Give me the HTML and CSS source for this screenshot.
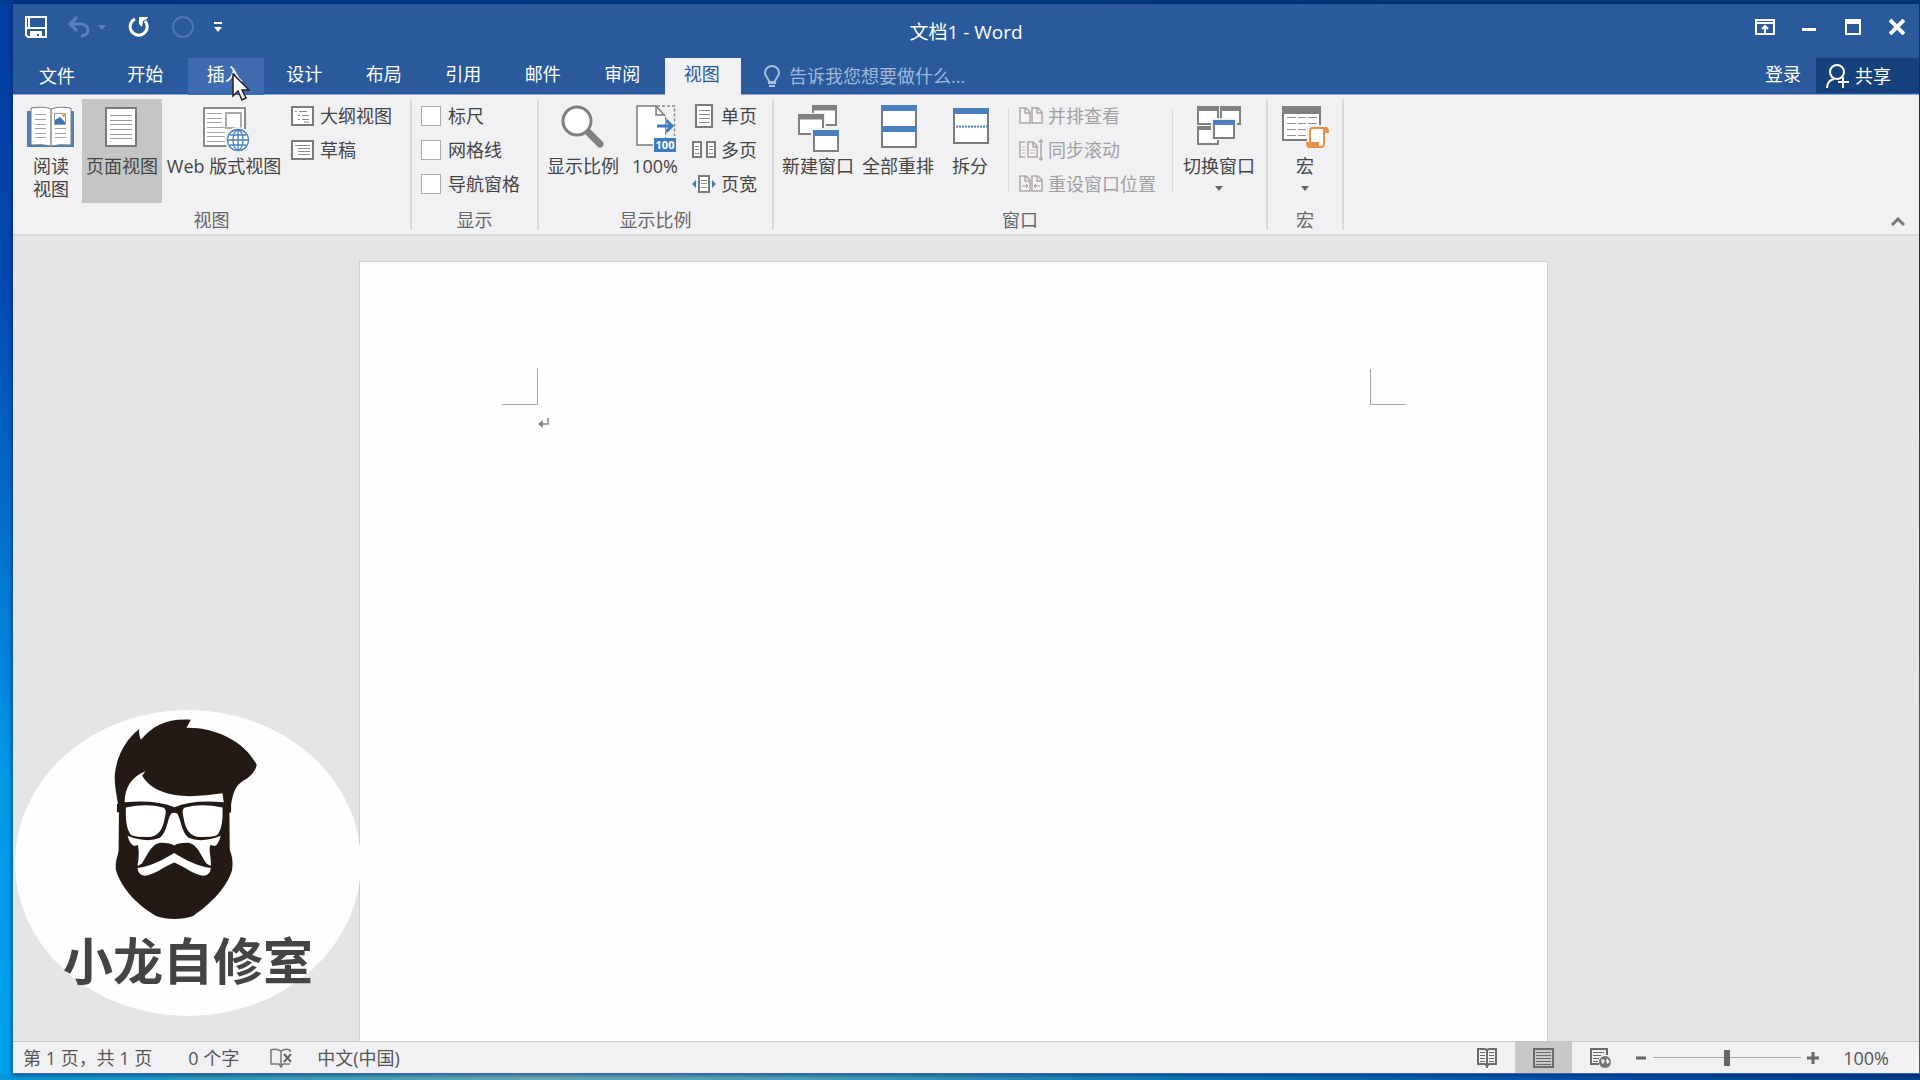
FILE: index.html
```html
<!DOCTYPE html>
<html lang="zh-CN">
<head>
  <meta charset="UTF-8">
  <meta name="viewport" content="width=device-width, initial-scale=1.0">
  <title>文档1 - Word</title>
  <link rel="stylesheet" href="styles.css">
</head>
<body>

  <div class="window">

    <!-- Title bar -->
    <header class="titlebar">
      <div class="quick-access">
        <button class="qa-btn" aria-label="保存">
          <svg width="22" height="22" viewBox="0 0 22 22"><path d="M1 1h20v20H3l-2-2zM2 12h18M4 2v10" fill="none" stroke="#fff" stroke-width="2"/><path d="M5 15h12v6h-3v-3h-2v3H5z" fill="#fff"/></svg>
        </button>
        <button class="qa-btn undo" aria-label="撤消">
          <svg width="24" height="22" viewBox="0 0 24 22"><path d="M10 1L3 8l7 7M3 8h10c11 0 10 12 1 12" fill="none" stroke="#5a82bd" stroke-width="3"/></svg>
          <svg width="8" height="5" viewBox="0 0 8 5"><path d="M0 0h8L4 5z" fill="#5a82bd"/></svg>
        </button>
        <button class="qa-btn redo" aria-label="重复">
          <svg width="22" height="22" viewBox="0 0 22 22"><path d="M7 3A8.500 8.500 0 1 0 17 5" fill="none" stroke="#fff" stroke-width="3"/><path d="M11 1h9l-1 2-4 2-1 6-3-3z" fill="#fff"/></svg>
        </button>
        <button class="qa-btn circle" aria-label="触摸模式">
          <svg width="22" height="22" viewBox="0 0 22 22"><circle cx="11" cy="11" r="10" fill="none" stroke="#4d78b6" stroke-width="2"/></svg>
        </button>
        <button class="qa-btn" aria-label="自定义快速访问工具栏">
          <svg width="8" height="10" viewBox="0 0 8 10"><path d="M0 0h8v2H0zM0 5h8L4 10z" fill="#fff"/></svg>
        </button>
      </div>
      <h1 class="doc-title">文档1 - Word</h1>
      <div class="window-controls">
        <button aria-label="功能区显示选项">
          <svg width="20" height="16" viewBox="0 0 20 16"><path d="M1 1h18v14H1zM1 4h18M10 14V7M7 10l3-3 3 3" fill="none" stroke="#fff" stroke-width="2"/></svg>
        </button>
        <button aria-label="最小化">
          <svg width="14" height="16" viewBox="0 0 14 16"><path d="M0 9h14v3H0z" fill="#fff"/></svg>
        </button>
        <button aria-label="最大化">
          <svg width="16" height="16" viewBox="0 0 16 16"><path d="M1 1h14v14H1z" fill="none" stroke="#fff" stroke-width="2"/><path d="M0 0h16v5H0z" fill="#fff"/></svg>
        </button>
        <button aria-label="关闭">
          <svg width="16" height="16" viewBox="0 0 16 16"><path d="M1 1l14 14M15 1L1 15" stroke="#fff" stroke-width="4"/></svg>
        </button>
      </div>
    </header>

    <!-- Ribbon tabs -->
    <nav class="tabs">
      <button class="file-tab">文件</button>
      <div class="tab-list">
        <button class="tab">开始</button>
        <button class="tab hovered">插入</button>
        <button class="tab">设计</button>
        <button class="tab">布局</button>
        <button class="tab">引用</button>
        <button class="tab">邮件</button>
        <button class="tab">审阅</button>
        <button class="tab active">视图</button>
      </div>
      <label class="tell-me">
        <svg width="16" height="22" viewBox="0 0 16 22"><path d="M5 17c0-4-4-5-4-9a7 7 0 0 1 14 0c0 4-4 5-4 9z" fill="none" stroke="#a9c0e0" stroke-width="2"/><path d="M4 18h8M5 21h6" stroke="#a9c0e0" stroke-width="2"/></svg>
        <input type="text" placeholder="告诉我您想要做什么..." aria-label="告诉我您想要做什么">
      </label>
      <a class="sign-in" href="#">登录</a>
      <button class="share">
        <svg width="24" height="26" viewBox="0 0 24 26"><circle cx="11" cy="9" r="7" fill="none" stroke="#fff" stroke-width="2"/><path d="M1 25c0-5 3-8 7-9M17 14v11M12 19h11" fill="none" stroke="#fff" stroke-width="2"/></svg>
        共享
      </button>
    </nav>

    <!-- Ribbon, view tab -->
    <section class="ribbon">
      <div class="group group-views">
        <div class="group-body">
          <button class="big reading">
            <svg class="icon" viewBox="0 0 48 48"><path d="M0 7h47v36H0z" fill="#4a80bd"/><path d="M4 4q13-2 20 1q7-3 20-1v37q-12-1-20 1q-8-2-20-1z" fill="#fff" stroke="#7b7b7b" stroke-width="1"/><path d="M24 5v37" stroke="#8a8a8a" stroke-width="1.500"/><path d="M8 10.500h11M8 15.500h11M8 20.500h11M8 24.500h11M8 29.500h11M8 33.500h11M28 24.500h11M28 29.500h11M28 33.500h11" stroke="#a3a3a3"/><path d="M27.500 9.500h11v11h-11z" fill="#fff" stroke="#999"/><path d="M28 20v-4l5-3 5 5v2z" fill="#3c74b5"/><circle cx="37" cy="11" r="2" fill="#e9a36c"/></svg>
            <span>阅读<br>视图</span>
          </button>
          <button class="big pressed">
            <svg class="icon" viewBox="0 0 48 48"><path d="M8 4h30v38H8z" fill="#fff" stroke="#7b7b7b" stroke-width="2"/><path d="M12 11.500h22M12 16.500h22M12 20.500h22M12 25.500h22M12 30.500h22M12 34.500h22" stroke="#9b9b9f"/></svg>
            <span>页面视图</span>
          </button>
          <button class="big web">
            <svg class="icon" viewBox="0 0 48 48"><path d="M4 4h41v38H4z" fill="#fff" stroke="#8a8a8a" stroke-width="2"/><path d="M7 9.500h15M7 14.500h15M7 18.500h15M7 23.500h18M7 28.500h18M7 32.500h18M7 37.500h18" stroke="#a3a3a8"/><path d="M26 9h15v15H26z" fill="#fff" stroke="#aaa" stroke-width="2"/><circle cx="38" cy="36" r="13" fill="#f1f1f3"/><circle cx="38" cy="36" r="11" fill="#fff"/><g fill="none" stroke="#4a80bd" stroke-width="1.300"><circle cx="38" cy="36" r="10.500"/><ellipse cx="38" cy="36" rx="5" ry="10"/><path d="M38 26v20M28 36h20M30 31h16M30 41h16"/></g></svg>
            <span>Web 版式视图</span>
          </button>
          <div class="small-list">
            <button class="small">
              <svg viewBox="0 0 24 24"><path d="M1 3h21v18H1z" fill="#fff" stroke="#7b7b7b" stroke-width="2"/><path d="M4 7.500h2M8 7.500h8M7 11.500h2M11 11.500h7M7 15.500h2M11 15.500h7M13 18h5" stroke="#8a8a8e"/></svg>
              大纲视图
            </button>
            <button class="small">
              <svg viewBox="0 0 24 24"><path d="M1 3h21v18H1z" fill="#fff" stroke="#7b7b7b" stroke-width="2"/><path d="M4 7.500h15M7 10.500h12M7 13.500h12M7 16.500h12" stroke="#8a8a8e"/></svg>
              草稿
            </button>
          </div>
        </div>
        <div class="group-name">视图</div>
      </div>

      <div class="group group-show">
        <div class="group-body">
          <div class="check-list">
            <label><input type="checkbox"> 标尺</label>
            <label><input type="checkbox"> 网格线</label>
            <label><input type="checkbox"> 导航窗格</label>
          </div>
        </div>
        <div class="group-name">显示</div>
      </div>

      <div class="group group-zoom">
        <div class="group-body">
          <button class="big">
            <svg class="icon" viewBox="0 0 48 48"><path d="M27 26l14 14" stroke="#808080" stroke-width="7" stroke-linecap="round"/><circle cx="18" cy="17" r="14" fill="#fff" stroke="#808080" stroke-width="3"/></svg>
            <span>显示比例</span>
          </button>
          <button class="big narrow">
            <svg class="icon" viewBox="0 0 48 48"><path d="M26 2h17.500v30M34.500 13v21" fill="none" stroke="#8a8a8a" stroke-width="1.500" stroke-dasharray="3 2"/><path d="M6 2h19l9 9v30H6z" fill="#fff"/><path d="M34 12l-9-10H6v39h16M25 2v9h9" fill="none" stroke="#7b7b7b" stroke-width="1.500"/><path d="M26 22h15M35 16l6 6-6 6" fill="none" stroke="#3f7cbf" stroke-width="3"/><path d="M23 34h22v14H23z" fill="#3f7cbf"/><text x="34" y="45" class="icon-text">100</text></svg>
            <span>100%</span>
          </button>
          <div class="small-list">
            <button class="small">
              <svg viewBox="0 0 24 24"><path d="M4 1h16v22H4z" fill="#fff" stroke="#7b7b7b" stroke-width="2"/><path d="M7 6.500h11M7 10.500h11M7 14.500h11M7 18.500h11" stroke="#8a8a8e"/></svg>
              单页
            </button>
            <button class="small">
              <svg viewBox="0 0 24 24"><path d="M1 4h8v15H1zM15 4h8v15h-8z" fill="#fff" stroke="#7b7b7b" stroke-width="2"/><path d="M3 8.500h4M3 11.500h4M3 15.500h4M17 8.500h4M17 11.500h4M17 15.500h4" stroke="#8a8a8e"/></svg>
              多页
            </button>
            <button class="small">
              <svg viewBox="0 0 24 24"><path d="M7 4h10v16H7z" fill="#fff" stroke="#7b7b7b" stroke-width="2"/><path d="M9 8.500h6M9 11.500h6M9 15.500h6" stroke="#8a8a8e"/><path d="M4 8v8l-4-4zM20 8v8l4-4z" fill="#3f7cbf"/></svg>
              页宽
            </button>
          </div>
        </div>
        <div class="group-name">显示比例</div>
      </div>

      <div class="group group-window">
        <div class="group-body">
          <button class="big">
            <svg class="icon" viewBox="0 0 48 48"><g fill="#fff" stroke="#808080" stroke-width="2"><path d="M19 2h23v19H19z"/><path d="M19 4h23" stroke-width="5"/><path d="M3 9h29v24H3z" fill="#f1f1f3" stroke="none"/><path d="M5 11h24v19H5z"/><path d="M5 13h24" stroke-width="5"/><path d="M17 24h30v24H17z" fill="#f1f1f3" stroke="none"/><path d="M20 27h24v20H20z"/></g><path d="M19 26h26v6H19z" fill="#4a80bd"/></svg>
            <span>新建窗口</span>
          </button>
          <button class="big">
            <svg class="icon" viewBox="0 0 48 48"><path d="M8 2h34v41H8z" fill="#fff" stroke="#7b7b7b" stroke-width="2"/><path d="M7 1h36v6H7zM7 22h36v6H7z" fill="#4a80bd"/></svg>
            <span>全部重排</span>
          </button>
          <button class="big narrow">
            <svg class="icon" viewBox="0 0 48 48"><path d="M8 5h34v34H8z" fill="#fff" stroke="#7b7b7b" stroke-width="2"/><path d="M7 4h36v6H7z" fill="#4a80bd"/><path d="M10 22.500h31" stroke="#4a80bd" stroke-width="2" stroke-dasharray="2 1"/></svg>
            <span>拆分</span>
          </button>
          <div class="small-list divided">
            <button class="small" disabled>
              <svg viewBox="0 0 24 24"><path d="M1 4h6l4 4v11H1zM13 4h6l4 4v11H13zM6 4v5h5M18 4v5h5" fill="#faf3f2" stroke="#a9a9a9" stroke-width="1.500"/></svg>
              并排查看
            </button>
            <button class="small" disabled>
              <svg viewBox="0 0 24 24"><path d="M6 4H1v15h5M9 4h5l4 4v11H9zM14 4v5h4" fill="#faf3f2" stroke="#a9a9a9" stroke-width="1.500"/><path d="M3 9h3M3 12h3M3 15h3M11 12h5M11 15h5" stroke="#c9b3a8"/><path d="M22 2v20M20 4l2-2 2 2M20 20l2 2 2-2" fill="none" stroke="#a9a9a9" stroke-width="1.500"/></svg>
              同步滚动
            </button>
            <button class="small" disabled>
              <svg viewBox="0 0 24 24"><path d="M1 4h6l4 4v11H1zM13 4h6l4 4v11H13zM6 4v5h5M18 4v5h5" fill="#faf3f2" stroke="#a9a9a9" stroke-width="1.500"/><path d="M3 14h6M7 12l2 2-2 2M21 14h-6M17 12l-2 2 2 2" fill="none" stroke="#999"/></svg>
              重设窗口位置
            </button>
          </div>
          <button class="big">
            <svg class="icon" viewBox="0 0 48 48"><g fill="#fff" stroke="#808080" stroke-width="2"><path d="M3 3h20v17H3zM26 3h19v17H26zM3 23h20v17H3z"/><path d="M2 5h22M25 5h21M2 24h22" stroke-width="4"/><path d="M16 14h26v22H16z" fill="#f1f1f3" stroke="none"/><path d="M19 17h20v17H19z"/></g><path d="M18 16h22v5H18z" fill="#4a80bd"/></svg>
            <span>切换窗口</span>
            <i class="caret"></i>
          </button>
        </div>
        <div class="group-name">窗口</div>
      </div>

      <div class="group group-macro">
        <div class="group-body">
          <button class="big narrow">
            <svg class="icon" viewBox="0 0 48 48"><path d="M2 3h37v33H2z" fill="#fff" stroke="#7b7b7b" stroke-width="2"/><path d="M1 2h39v8H1z" fill="#808080"/><path d="M6 13.500h9M17 13.500h8M27 13.500h9M6 19.500h9M17 19.500h8M27 19.500h9M6 25.500h9M17 25.500h8M6 31.500h9M17 31.500h8" stroke="#8f8f96"/><path d="M26 21h23v24H26z" fill="#f1f1f3"/><path d="M29 39V27q0-3 3-3h11v16q0 3-3 3H28" fill="#fff" stroke="#ea9045" stroke-width="2"/><path d="M43 23h3q2 1 2 6h-5zM25 38h13v4l2 2H27q-2-1-2-6z" fill="#ea9045"/></svg>
            <span>宏</span>
            <i class="caret"></i>
          </button>
        </div>
        <div class="group-name">宏</div>
      </div>

      <button class="collapse" aria-label="折叠功能区">
        <svg width="14" height="10" viewBox="0 0 14 10"><path d="M1 8l6-6 6 6" fill="none" stroke="#777" stroke-width="3"/></svg>
      </button>
    </section>

    <!-- Document -->
    <main class="workspace">
      <article class="page">
        <div class="margin-marks">
          <span class="mark mark-left"></span>
          <span class="mark mark-right"></span>
        </div>
        <p class="paragraph">
          <svg width="12" height="12" viewBox="0 0 12 12"><path d="M10 1v6H5" fill="none" stroke="#888" stroke-width="1.500"/><path d="M0 7l5-4v8z" fill="#888"/></svg>
        </p>
      </article>

      <div class="watermark">
        <svg class="face" viewBox="340 80 440 610">
          <path fill="#231a16" d="M354 340C350 310 342 285 345 250C350 200 375 150 418 116Q416 136 423 148C460 105 500 84 573 88L560 112C640 110 735 150 771 224C765 250 745 265 725 275C705 290 700 310 694 342V366L689 368L690 480C700 505 699 520 697 540C680 600 620 650 580 678C545 690 500 690 467 677C420 650 365 600 348 540C345 510 354 500 356 480L357 366H351V342z"/>
          <g fill="#fff">
            <path d="M374 336C375 290 395 260 437 243L427 256C450 300 510 318 570 318Q620 316 668 309L672 336Q575 328 524 351Q470 328 374 336z"/>
            <path d="M378 352Q440 338 490 352Q500 356 497 372C490 410 485 430 455 440Q420 443 396 436C380 425 376 385 378 352z"/>
            <path d="M668 352Q606 338 556 352Q546 356 549 372C556 410 561 430 591 440Q626 443 650 436C666 425 670 385 668 352z"/>
            <path d="M383 437Q440 460 480 443C502 425 503 385 514 370Q523 366 532 370C543 385 544 425 566 443Q606 460 663 437Q655 465 645 468L632 465C625 480 635 500 633 528L620 520C600 490 590 458 560 458Q535 458 523 466Q511 458 486 458C456 458 446 490 426 520L413 528C418 500 417 480 414 465L402 468Q388 460 383 437z"/>
            <path d="M413 534C450 530 490 510 523 489C556 510 596 530 633 534C632 555 615 560 600 555C570 545 545 525 523 517C501 525 476 545 446 555C431 560 414 555 413 534z"/>
          </g>
        </svg>
        <span class="brand">小龙自修室</span>
      </div>
    </main>

    <!-- Status bar -->
    <footer class="statusbar">
      <span class="pages">第 1 页，共 1 页</span>
      <span class="words">0 个字</span>
      <svg class="proof" width="22" height="20" viewBox="0 0 22 20"><path d="M11 3Q6 0 1 2v14h8l2 3V3Q15 0 20 2v2M11 19l2-3h7" fill="none" stroke="#777" stroke-width="1.500"/><path d="M14 6l7 8M21 6l-7 8" stroke="#666" stroke-width="2"/></svg>
      <span>中文(中国)</span>
      <div class="view-switch">
        <button aria-label="阅读视图">
          <svg width="20" height="20" viewBox="0 0 20 20"><path d="M10 2L8 1H1v15h7l2 2 2-2h7V1h-7l-2 1v18" fill="none" stroke="#6b6b6b" stroke-width="2"/><path d="M3 4.500h5M3 7.500h5M3 10.500h5M3 13.500h5M12 4.500h5M12 7.500h5M12 10.500h5M12 13.500h5" stroke="#6b6b6b"/></svg>
        </button>
        <button class="on" aria-label="页面视图">
          <svg width="21" height="20" viewBox="0 0 21 20"><path d="M1 1h19v18H1z" fill="none" stroke="#6b6b6b" stroke-width="2"/><path d="M3 4.500h15M3 7.500h15M3 10.500h15M3 13.500h15M3 16.500h15" stroke="#6b6b6b"/></svg>
        </button>
        <button aria-label="Web 版式视图">
          <svg width="21" height="20" viewBox="0 0 21 20"><path d="M9 16H1V1h16v6" fill="none" stroke="#6b6b6b" stroke-width="2"/><path d="M3 4.500h11M3 7.500h8M3 10.500h6M3 13.500h5" stroke="#6b6b6b"/><circle cx="15" cy="14" r="6" fill="#737373"/><path d="M11 11l4 1-1 3-2 1zM17 10l3 4-3 2-1-3z" fill="#e8e8ea"/></svg>
        </button>
      </div>
      <div class="zoom">
        <button aria-label="缩小"><svg width="14" height="14" viewBox="0 0 14 14"><path d="M2 7h10" stroke="#666" stroke-width="3"/></svg></button>
        <input type="range" min="0" max="100" value="50" aria-label="缩放">
        <button aria-label="放大"><svg width="14" height="14" viewBox="0 0 14 14"><path d="M1 7h12M7 1v12" stroke="#666" stroke-width="3"/></svg></button>
        <span class="zoom-value">100%</span>
      </div>
    </footer>
  </div>

  <!-- Mouse pointer -->
  <svg class="pointer" width="18" height="29" viewBox="0 0 18 29"><path d="M1 1v22l5-5 4 9 4-2-4-8h7z" fill="#fff" stroke="#222" stroke-width="1.500"/></svg>

</body>
</html>
```
FILE: styles.css
```css
* {
  box-sizing: border-box;
}

body {
  margin: 0;
  height: 100vh;
  padding: 4px 1px 6px 13px;
  overflow: hidden;
  font-family: "Open Sans", "Noto Sans CJK SC", sans-serif;
  font-size: 18px;
  line-height: 24px;
  color: #444;
  background:
    linear-gradient(90deg, #0596dc, #2e9cbc 12%, #6ab0bb 28%, #4aa3bd 42%, #0a78b8 62%, #0452ac 82%, #03408c) bottom / 100% 6px no-repeat,
    linear-gradient(90deg, #033a92, #03438f 40%, #023a7c 75%, #033a78) top / 100% 4px no-repeat,
    linear-gradient(180deg, #0340a0, #0347b0 25%, #0468cc 45%, #0399e6 72%, #02a2ee);
}

button {
  border: none;
  padding: 0;
  background: none;
  color: inherit;
  font: inherit;
}

svg {
  display: block;
  flex: none;
}

.window {
  height: 100%;
  display: flex;
  flex-direction: column;
  box-shadow: 0 0 5px 1px rgba(0, 20, 80, 0.6);
}

/* title bar */
.titlebar {
  display: grid;
  grid-template-columns: 1fr auto 1fr;
  height: 54px;
  background: #2a5a9b;
  color: #fff;
}

.quick-access {
  display: flex;
  align-items: center;
  height: 46px;
  padding-left: 12px;
}

.qa-btn {
  display: flex;
  align-items: center;
}

.undo {
  gap: 7px;
  margin-left: 20px;
}

.redo {
  margin-left: 22px;
}

.circle {
  margin: 0 20px 0 22px;
}

.doc-title {
  margin: 0;
  padding-top: 16px;
  font-size: 19px;
  font-weight: 400;
}

.window-controls {
  display: flex;
  justify-content: flex-end;
  height: 46px;
}

.window-controls button {
  display: flex;
  align-items: center;
  justify-content: center;
  width: 44px;
}

/* tabs */
.tabs {
  display: flex;
  height: 37px;
  background: #2a5a9b;
  border-bottom: 1px solid #8fa6d0;
  color: #fff;
}

.file-tab {
  width: 88px;
  margin-right: 7px;
}

.tab-list {
  display: grid;
  grid-template-columns: repeat(8, 1fr);
  column-gap: 3px;
  width: 633px;
}

.tab {
  padding: 0 2px 5px 0;
}

.tab.hovered {
  background: #3f6cb1;
}

.tab.active {
  height: 37px;
  background: #f1f1f3;
  color: #2a5a9b;
}

.tell-me {
  display: flex;
  align-items: center;
  flex: 1;
  gap: 9px;
  padding-left: 23px;
}

.tell-me input {
  flex: 1;
  border: none;
  padding: 0;
  background: none;
  color: #fff;
  font: inherit;
}

.tell-me input::placeholder {
  color: #9fb8dc;
  opacity: 1;
}

.sign-in {
  padding: 4px 15px 0 0;
  color: #fff;
  text-decoration: none;
}

.share {
  display: flex;
  align-items: center;
  gap: 5px;
  width: 103px;
  height: 35px;
  padding-left: 10px;
  background: #15427c;
}

/* ribbon */
.ribbon {
  display: flex;
  padding: 4px 0;
  background: #f1f1f3;
  border-bottom: 2px solid #d9d9d9;
}

.group {
  border-right: 2px solid #dadada;
}

.group-body {
  display: flex;
  height: 111px;
  padding-left: 4px;
}

.group-name {
  line-height: 20px;
  text-align: center;
  color: #666;
}

.group-views {
  width: 399px;
}

.group-views .group-body {
  padding-left: 7px;
}

.group-show {
  width: 127px;
}

.group-show .group-body {
  padding-left: 9px;
}

.group-zoom {
  width: 235px;
}

.group-window {
  width: 494px;
}

.group-macro {
  width: 76px;
}

.group-macro .group-body {
  padding-left: 5px;
}

.big {
  display: flex;
  flex-direction: column;
  align-items: center;
  gap: 3px;
  width: 80px;
  height: 104px;
  padding-top: 5px;
  line-height: 23px;
  white-space: nowrap;
}

.big.reading {
  width: 62px;
}

.big.web {
  width: 124px;
}

.big.narrow {
  width: 64px;
}

.big.pressed {
  background: #c5c5c4;
}

.icon {
  width: 48px;
  height: 48px;
  overflow: visible;
}

.icon-text {
  fill: #fff;
  font-size: 11px;
  font-weight: 700;
  text-anchor: middle;
}

.caret {
  margin-top: 5px;
  border: 4px solid transparent;
  border-top: 5px solid #666;
  border-bottom: 0;
}

.small-list {
  padding-left: 5px;
}

.small {
  display: flex;
  align-items: center;
  gap: 5px;
  height: 34px;
  white-space: nowrap;
}

.small svg {
  width: 24px;
  height: 24px;
}

.small:disabled {
  color: #a0a0a0;
}

.divided {
  height: 84px;
  margin: 9px 6px 0;
  padding: 0 16px 0 10px;
  border-left: 1px solid #dadada;
  border-right: 1px solid #dadada;
}

.divided .small:first-child {
  margin-top: -9px;
}

.check-list label {
  display: flex;
  align-items: center;
  gap: 7px;
  height: 34px;
}

.check-list input {
  appearance: none;
  width: 20px;
  height: 20px;
  margin: 0;
  border: 1px solid #ababab;
  background: #fff;
}

.collapse {
  align-self: flex-end;
  margin: 0 14px 3px auto;
}

/* document area */
.workspace {
  position: relative;
  flex: 1;
  display: flex;
  justify-content: center;
  min-height: 0;
  padding: 25px 25px 0 0;
  background: #e5e5e5;
}

.page {
  width: 1189px;
  padding: 107px 141px 0 142px;
  background: #fefefe;
  border: 1px solid #cfcfcf;
  border-bottom: none;
}

.margin-marks {
  display: flex;
  justify-content: space-between;
}

.mark {
  width: 36px;
  height: 36px;
  border-bottom: 1px solid #a5a5a5;
}

.mark-left {
  border-right: 1px solid #a5a5a5;
}

.mark-right {
  border-left: 1px solid #a5a5a5;
}

.paragraph {
  margin: 0;
  padding: 12px 0 0 36px;
}

/* logo floating over the document */
.watermark {
  position: absolute;
  left: 2px;
  bottom: 25px;
  width: 346px;
  height: 306px;
  padding: 7px 0 0 48px;
  border-radius: 50%;
  background: #fefefe;
}

.face {
  width: 147px;
  height: 203px;
  margin-left: 50px;
}

.brand {
  display: block;
  margin-top: 11px;
  font-size: 50px;
  font-weight: 700;
  line-height: 60px;
  white-space: nowrap;
}

/* status bar */
.statusbar {
  display: flex;
  align-items: center;
  height: 33px;
  padding-left: 10px;
  background: #f1f1f3;
  border-top: 1px solid #c6c6c6;
  border-bottom: 1px solid #3c63ad;
  color: #555;
}

.pages {
  margin-right: 36px;
}

.proof {
  margin: 0 25px 0 31px;
}

.view-switch {
  display: flex;
  align-self: stretch;
  margin-left: auto;
}

.view-switch button {
  display: flex;
  align-items: center;
  justify-content: center;
  width: 57px;
}

.view-switch .on {
  background: #c8c8c9;
}

.zoom {
  display: flex;
  align-items: center;
  gap: 5px;
  padding: 0 30px 0 5px;
}

.zoom input {
  appearance: none;
  width: 148px;
  height: 16px;
  margin: 0;
  background: linear-gradient(#a8a8a8, #a8a8a8) center / 100% 1px no-repeat;
}

.zoom input::-webkit-slider-thumb {
  appearance: none;
  width: 6px;
  height: 16px;
  background: #666;
}

.zoom-value {
  margin-left: 18px;
}

/* mouse pointer over the tabs */
.pointer {
  position: absolute;
  left: 232px;
  top: 73px;
}
```
